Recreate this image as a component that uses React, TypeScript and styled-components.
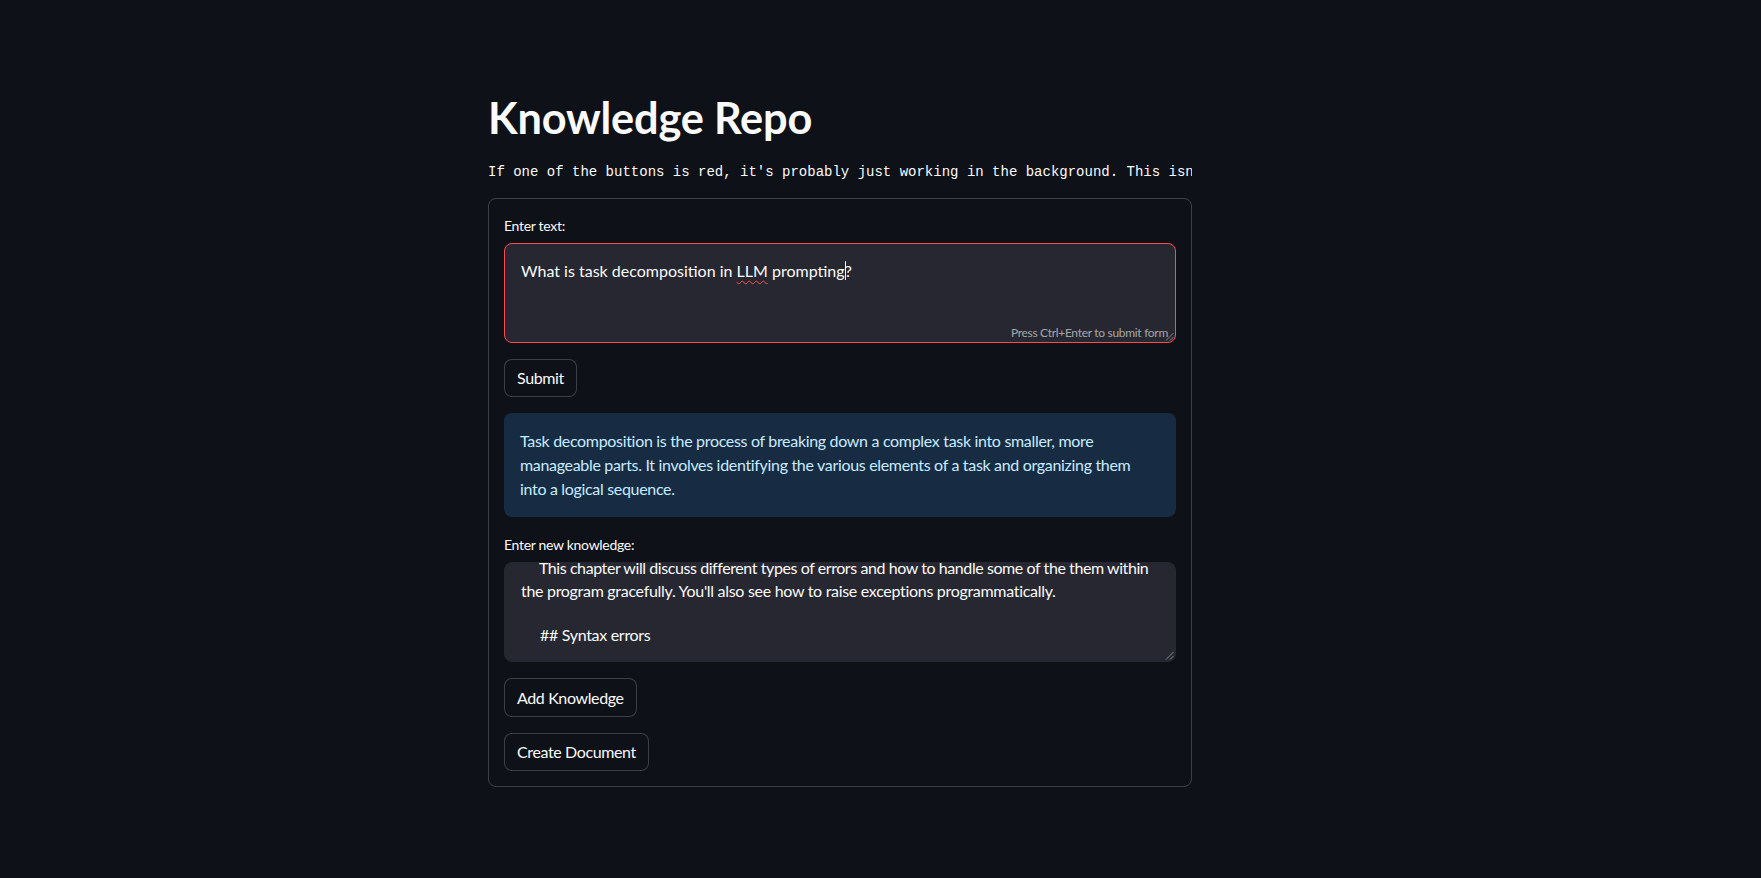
import React from "react";
import styled, { createGlobalStyle } from "styled-components";

const GlobalStyle = createGlobalStyle`
  html, body { margin: 0; padding: 0; background: #0e1117; }
  body { font-family: Lato, "Noto Sans", sans-serif; color: #fafafa; }
  #root { min-height: 100vh; }
  *, *::before, *::after { box-sizing: border-box; }
`;

const Page = styled.main`
  min-height: 100vh;
  padding: 91px 0 80px 488px;
`;

const Column = styled.div`
  width: 704px;
  display: flex;
  flex-direction: column;
`;

const Title = styled.h1`
  margin: 0;
  font-size: 43.3px;
  line-height: 52.8px;
  font-weight: 700;
  color: #fafafa;
  letter-spacing: -0.2px;
`;

const Notice = styled.div`
  margin-top: 18px;
  font-family: "Liberation Mono", "DejaVu Sans Mono", monospace;
  font-size: 14px;
  line-height: 21px;
  white-space: pre;
  overflow: hidden;
  color: #fafafa;
`;

const Form = styled.form`
  margin: 15px 0 0;
  border: 1px solid rgba(250, 250, 250, 0.2);
  border-radius: 8px;
  padding: 15px;
  display: flex;
  flex-direction: column;
  gap: 16px;
`;

const Field = styled.div`
  display: flex;
  flex-direction: column;
`;

const Label = styled.label`
  font-size: 14px;
  line-height: 24px;
  min-height: 24px;
  margin-bottom: 5px;
  letter-spacing: -0.3px;
  color: #fafafa;
`;

const TextBox = styled.div<{ $focused?: boolean }>`
  position: relative;
  height: 100px;
  background: #262730;
  border: 1px solid ${(p) => (p.$focused ? "#ff4b4b" : "#262730")};
  border-radius: 8px;
  overflow: hidden;
  font-size: 16px;
  line-height: 22.4px;
  color: #fafafa;
`;

const TextScroll = styled.div<{ $tight?: boolean }>`
  height: 100%;
  padding: 16px;
  overflow: hidden;
  white-space: ${(p) => (p.$tight ? "pre" : "pre-wrap")};
  letter-spacing: ${(p) => (p.$tight ? "-0.3px" : "0")};
`;

const Lines = styled.div<{ $scroll: number }>`
  margin-top: ${(p) => -p.$scroll}px;
`;

const TightLine = styled.span`
  letter-spacing: -0.42px;
`;

const Misspelled = styled.span`
  text-decoration: underline wavy #ff4b4b;
  text-decoration-thickness: 1px;
  text-underline-offset: 3px;
`;

const Caret = styled.span`
  display: inline-block;
  width: 1px;
  height: 19px;
  margin-right: -1px;
  background: #fafafa;
  vertical-align: -3px;
`;

const Hint = styled.div`
  position: absolute;
  right: 7px;
  bottom: 1px;
  font-size: 12px;
  line-height: 16px;
  letter-spacing: -0.3px;
  color: rgba(250, 250, 250, 0.6);
`;

const Grip = styled.svg`
  position: absolute;
  right: 1px;
  bottom: 1px;
  width: 9px;
  height: 9px;
`;

const Info = styled.div`
  background: rgba(61, 157, 243, 0.2);
  color: #c7ebff;
  border-radius: 8px;
  padding: 16px;
  font-size: 16px;
  line-height: 24px;
  letter-spacing: -0.32px;
`;

const Button = styled.button`
  align-self: flex-start;
  min-height: 38.4px;
  padding: 4px 12px;
  background: #0e1117;
  color: #fafafa;
  border: 1px solid rgba(250, 250, 250, 0.2);
  border-radius: 8px;
  font-family: inherit;
  font-size: 16px;
  line-height: 25.6px;
  letter-spacing: -0.38px;
  cursor: pointer;
`;

const ResizeGrip = () => (
  <Grip viewBox="0 0 9 9">
    <line x1="8.5" y1="1" x2="1" y2="8.5" stroke="rgba(250,250,250,0.45)" strokeWidth="1" />
    <line x1="8.5" y1="5" x2="5" y2="8.5" stroke="rgba(250,250,250,0.45)" strokeWidth="1" />
  </Grip>
);

const knowledgeRest = [
  "the program gracefully. You'll also see how to raise exceptions programmatically.",
  "",
  "     ## Syntax errors",
  "",
  "     Syntax errors occur when Python can't interpret your code.",
].join("\n");

export default function App() {
  return (
    <>
      <GlobalStyle />
      <Page>
        <Column>
          <Title>Knowledge Repo</Title>
          <Notice>
            If one of the buttons is red, it's probably just working in the background. This isn't a bug, please be patient.
          </Notice>
          <Form onSubmit={(e) => e.preventDefault()}>
            <Field>
              <Label>Enter text:</Label>
              <TextBox $focused>
                <TextScroll>
                  What is task decomposition in <Misspelled>LLM</Misspelled> prompting
                  <Caret />?
                </TextScroll>
                <Hint>Press Ctrl+Enter to submit form</Hint>
                <ResizeGrip />
              </TextBox>
            </Field>
            <Button type="submit">Submit</Button>
            <Info>
              Task decomposition is the process of breaking down a complex task into smaller, more manageable parts. It
              involves identifying the various elements of a task and organizing them into a logical sequence.
            </Info>
            <Field>
              <Label>Enter new knowledge:</Label>
              <TextBox>
                <TextScroll $tight>
                  <Lines $scroll={22}>
                    <TightLine>
                      {"     This chapter will discuss different types of errors and how to handle some of the them within"}
                    </TightLine>
                    {"\n" + knowledgeRest}
                  </Lines>
                </TextScroll>
                <ResizeGrip />
              </TextBox>
            </Field>
            <Button type="button">Add Knowledge</Button>
            <Button type="button">Create Document</Button>
          </Form>
        </Column>
      </Page>
    </>
  );
}
